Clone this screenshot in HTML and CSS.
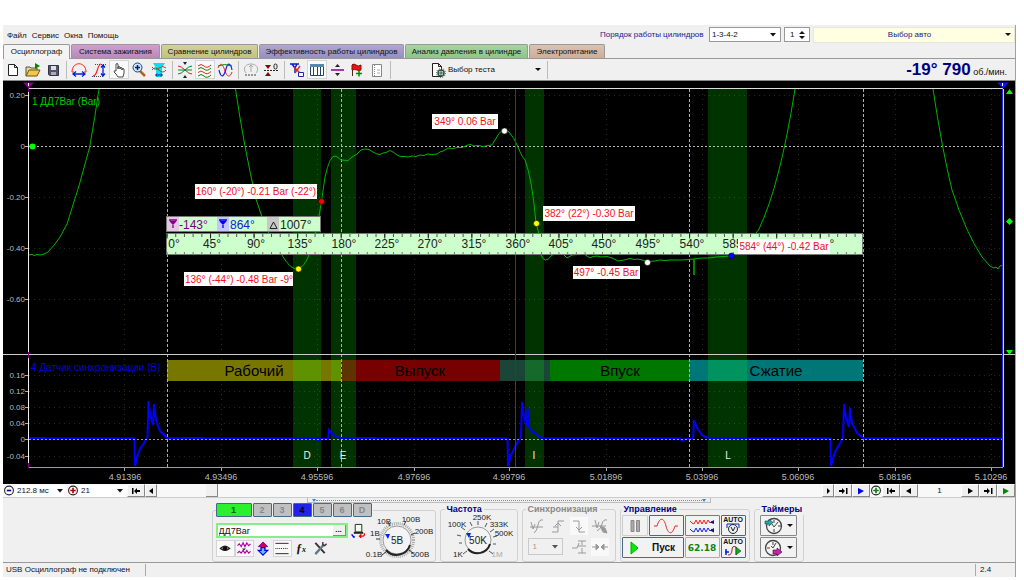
FILE: index.html
```html
<!DOCTYPE html>
<html lang="ru">
<head>
<meta charset="utf-8">
<title>USB Осциллограф</title>
<link rel="stylesheet" href="styles.css">
</head>
<body>
<main class="app">
  <header class="menubar">
    <nav class="menu">
      <button>Файл</button><button>Сервис</button><button>Окна</button><button>Помощь</button>
    </nav>
    <div class="setup">
      <label for="order">Порядок работы цилиндров</label>
      <select id="order" class="field order"><option>1-3-4-2</option></select>
      <select id="cyl" class="field cyl" aria-label="Номер цилиндра"><option>1</option></select>
      <button class="car"><span>Выбор авто</span><i class="caret"></i></button>
    </div>
  </header>

  <nav class="tabs">
    <button class="tab active">Осциллограф</button>
    <button class="tab ignition">Система зажигания</button>
    <button class="tab compare">Сравнение цилиндров</button>
    <button class="tab efficiency">Эффективность работы цилиндров</button>
    <button class="tab pressure">Анализ давления в цилиндре</button>
    <button class="tab power">Электропитание</button>
  </nav>

  <div class="toolbar">
    <button class="tool" aria-label="Новый"><svg viewBox="0 0 18 18"><path d="M4.500 3.500h6l3 3v8h-9zM10.500 3.500v3h3" fill="#fff" stroke="#222"/></svg></button>
    <button class="tool" aria-label="Открыть"><svg viewBox="0 0 18 18"><path d="M2 15V6h4l1 1h6v3" fill="#e8d890" stroke="#554"/><path d="M2 15l3-6h11l-3 6z" fill="#f2c84c" stroke="#665510"/><path d="M11 2l5 3-5 3z" fill="#080"/></svg></button>
    <button class="tool" aria-label="Сохранить"><svg viewBox="0 0 18 18"><path d="M4.500 4.500h10v10h-9l-1-1z" fill="#556" stroke="#334"/><path d="M7 5h5v4H7z" fill="#dde"/><path d="M7 11h5v3H7z" fill="#aab"/></svg></button>
    <i class="sep"></i>
    <button class="tool" aria-label="Период"><svg viewBox="0 0 18 18"><path d="M4 11H2C2 0 16 0 16 11h-2" fill="none" stroke="#f22"/><path d="M3 13h12M6 10.500L3 13l3 2.500M12 10.500l3 2.500-3 2.500" fill="none" stroke="#02d" stroke-width="1.300"/></svg></button>
    <button class="tool" aria-label="Амплитуда"><svg viewBox="0 0 18 18"><path d="M3 15c5 0 4-12 8-12" fill="none" stroke="#f22" stroke-width="1.200"/><path d="M5 3.500h11M2 15.500h12" stroke="#446" stroke-dasharray="1 1"/><path d="M13 4v11M11 6.500L13 4l2 2.500M11 12.500l2 2.500 2-2.500" fill="none" stroke="#02d" stroke-width="1.300"/></svg></button>
    <button class="tool pressed" aria-label="Рука"><svg viewBox="0 0 18 18"><path d="M6 10V3q1-1 2 0v5V6q1-1 2 0v2-1q1-1 2 0v2-1q1-1 2 0v4l-1 4H8l-2-3-2-2q0-2 2-1z" fill="#fff" stroke="#222" stroke-width=".8"/></svg></button>
    <button class="tool" aria-label="Лупа"><svg viewBox="0 0 18 18"><path d="M10 10l5 5" stroke="#a62" stroke-width="2.500"/><circle cx="7.500" cy="6.500" r="4.500" fill="#cfe4fa" stroke="#247"/><path d="M5 6.500h5M7.500 4v5" stroke="#026" stroke-width="1.500"/></svg></button>
    <button class="tool" aria-label="Масштаб"><svg viewBox="0 0 18 18"><path d="M3 2h12l-3 5v9H6V7z" fill="#1de"/><path d="M2 6q3 4 7 1t7 0" fill="none" stroke="#f22"/><path d="M2 9q3-4 7 0t7 0" fill="none" stroke="#086"/><path d="M6 14h6M7 12.500L5.500 14 7 15.500M11 12.500l1.500 1.500-1.500 1.500" fill="none" stroke="#02a"/></svg></button>
    <i class="sep"></i>
    <button class="tool" aria-label="Совместить"><svg viewBox="0 0 18 18"><path d="M2 5q3 0 7 4t7 4" fill="none" stroke="#d22"/><path d="M2 13q3 0 7-4t7-4M2 9h14" fill="none" stroke="#083"/><path d="M7 1h4L9 4zM7 17h4l-2-3z" fill="#222"/></svg></button>
    <button class="tool pressed" aria-label="Раздельно"><svg viewBox="0 0 18 18" fill="none"><path d="M2 5q3-3 6 0t7-1" stroke="#e22"/><path d="M2 8q3-3 6 0t7-1" stroke="#080"/><path d="M2 11.500q3-3 6 0t7-1" stroke="#e22"/><path d="M2 15q3-3 6 0t7-1" stroke="#080"/></svg></button>
    <button class="tool" aria-label="Наложить"><svg viewBox="0 0 18 18" fill="none"><path d="M2 7c3-7 5-3 7 3s5 7 7 1" stroke="#e22"/><path d="M3 9c2 9 5 7 7-1s5-5 6 1" stroke="#22e" stroke-width="1.200"/><path d="M2 5q6-3 14 0" stroke="#080"/></svg></button>
    <i class="sep"></i>
    <button class="tool" aria-label="Авто" disabled><svg viewBox="0 0 18 18"><path d="M4 12C0 7 4 3 9 3s9 4 5 9M9 4v7M7 6l2-2 2 2" fill="none" stroke="#aaa"/><path d="M3 14h12" stroke="#999" stroke-width="2" stroke-dasharray="2 1"/></svg></button>
    <button class="tool" aria-label="Ноль"><svg viewBox="0 0 18 18"><path d="M3 4h6L6 8zM3 15h6l-3-4z" fill="#800"/><path d="M2 9.500h14" stroke="#222" stroke-dasharray="2 1"/><rect x="12" y="3" width="3" height="5" rx="1.500" fill="none" stroke="#222"/></svg></button>
    <i class="sep"></i>
    <button class="tool" aria-label="Фильтр"><svg viewBox="0 0 18 18"><path d="M2 3h9M4 3l3 4v5M9 3L7 7" fill="none" stroke="#02c" stroke-width="1.500"/><path d="M6 6l7 7M12 5l-5 7" stroke="#e22" stroke-width="1.300"/><path d="M10.500 11.500h5v4h-5z" fill="#fff" stroke="#22a"/></svg></button>
    <button class="tool pressed" aria-label="Таблица"><svg viewBox="0 0 18 18"><path d="M2.500 3.500h13v11h-13z" fill="#fff" stroke="#246"/><path d="M2 3h14v3H2z" fill="#58a"/><path d="M5.500 6v8M9.500 6v8M12.500 6v8" stroke="#246"/></svg></button>
    <button class="tool" aria-label="Разделить"><svg viewBox="0 0 18 18"><path d="M3 9h13" stroke="#808" stroke-width="1.500"/><path d="M7 6h5L9.500 3zM7 12h5l-2.500 3z" fill="#222"/></svg></button>
    <button class="tool" aria-label="Добавить метку"><svg viewBox="0 0 18 18"><path d="M4.500 3v12" stroke="#522"/><path d="M4 4q2-2 4 0t5 0v5q-2 1-4 0t-5 0z" fill="#e11" stroke="#811"/><path d="M8 12.500h6M11 9.500v6" stroke="#080" stroke-width="1.500"/></svg></button>
    <button class="tool" aria-label="Отчёт" disabled><svg viewBox="0 0 18 18"><path d="M4.500 3.500h9v12h-9z" fill="#fff" stroke="#888"/><path d="M6.500 4v11" stroke="#888" stroke-dasharray="1 1"/><path d="M9 9h3M9 12h3" stroke="#aaa"/></svg></button>
    <i class="sep"></i>
    <button class="test">
      <svg viewBox="0 0 18 18"><path d="M3.500 2.500h6l3 3v10h-9zM9.500 2.500v3h3" fill="#fff" stroke="#222"/><circle cx="12" cy="12" r="3" fill="#fff" stroke="#354" stroke-width="1.500"/><path d="M9 12h6M12 9v6" stroke="#354"/><circle cx="12" cy="12" r="4.500" fill="none" stroke="#354" stroke-dasharray="1 1.300"/></svg>
      <span>Выбор теста</span><i class="caret"></i>
    </button>
    <i class="sep"></i>
    <output class="rpm"><b>-19° 790</b> об./мин.</output>
  </div>

  <svg class="scope" viewBox="3 81 1012 403" role="img" aria-label="Осциллограмма">
    <rect x="3" y="81" width="1012" height="403" fill="#000"/>
    <g class="grid">
      <path d="M124.500 89V467M221.500 89V467M317.500 89V467M414.500 89V467M509.500 89V467M606.500 89V467M702.500 89V467M798.500 89V467M895.500 89V467M991.500 89V467"/>
      <path d="M29 95.500H1003M29 197.500H1003M29 248.500H1003M29 299.500H1003M29 375.500H1003M29 391.500H1003M29 407.500H1003M29 423.500H1003M29 456.500H1003"/>
    </g>
    <g class="phases">
      <rect x="167" y="360" width="174" height="21" fill="#770"/>
      <rect x="341" y="360" width="159" height="21" fill="#700"/>
      <rect x="500" y="360" width="50" height="21" fill="#1b4536"/>
      <rect x="550" y="360" width="139" height="21" fill="#007700"/>
      <rect x="689" y="360" width="174" height="21" fill="#077"/>
    </g>
    <g fill="#0f0" fill-opacity=".2">
      <rect x="293" y="89" width="28" height="378"/><rect x="331" y="89" width="25" height="378"/>
      <rect x="525" y="89" width="19" height="378"/><rect x="708" y="89" width="39" height="378"/>
    </g>
    <g class="phase-name">
      <text x="254" y="376">Рабочий</text><text x="420" y="376">Выпуск</text>
      <text x="620" y="376">Впуск</text><text x="776" y="376">Сжатие</text>
    </g>
    <path d="M29 146.500H1003" stroke="#bbb" stroke-dasharray="2 2"/>
    <path d="M167.500 89V467M341.500 89V467M689.500 89V467M863.500 89V467" stroke="#c4c400" stroke-dasharray="3 2"/>

    <path class="pressure-line" d="M28 255l4-.5 2 1 3-1 3 .5 4-1 4-2 7-8 5-7 7-13Q80 185 89.700 147 95 117 99 89M235.500 89Q244 147 256 199L262 217 274 246 282 255Q298 283 309 255L317 228 321.500 201 325 177Q330 155 335 156 338 157 341 160L348 160.500 352 157 357 154 361 150 365 149 369 149.500 372 151.500 377 154 380 154.500 383 153 386 152.500 390 150.500 393 152 398 155.500 401 156.500 405 156.500 408 157 412 156 416 156.500 420 155 424 155.500 427 154 432 154.500 437 154 440 152 443 151 448 148 453 148.500 457 147.500 462 147.500 468 145 471 144.500 473 146 478 145.500 483 146.500 488 145.500 492 145 498 135Q503 127 509 132 515 139 517 145L522 156 525 160Q532 178 536 223L539 234 541 255Q545 265 552 255L562 253 567 258 572 255 584 254 590 258 593 256.500 597 256 601 257 607 256.500 612 258 618 261 624 260 630 258.500 634 259.500 638 259 648 261.500 655 261 660 260 665 260.500 670 260 682 260 694 259V275V259L702 258 709 258 716 257 731 256L750 240 756 233 759 229Q780 185 795 89M933 89Q942 149 952 190 966 233 982 257L990 266 994 268 996 267 998 269 1000 266 1003 265"/>
    <path class="sync-line" d="M28 438.500H134.500L135 466 137 457 140 449 144 443 147.500 437 148.500 401 150 414 153 425 154 404 156 420 160 431 167 438 185 438.500H318V441L321 439H328L329 430 334 435.500 341 438.500H507.500L508 466 511 455 517 443 521 437 522 402 524 417 527 426 527.500 408 529 427 533 432 542 438.500H680L682 441 685 439H693L694 420 697 428 702 435 709 438.500H830.500L831 466 835 452 843 438 844 404 846 418 849 427 850 408 852 423 857 433 864 438.500H1003"/>
    <path d="M29 437.500h17M182 437.500h22M343 437.500h33M584 437.500h12M712 437.500h30" stroke="#00f"/>
    <path d="M29 439.500H1003" stroke="#fff" stroke-opacity=".6" stroke-dasharray="2 2"/>

    <path d="M28.500 88.500H1003" stroke="#ddd"/>
    <path d="M28.500 88V467" stroke="#eee"/>
    <path d="M3 354.500H1015" stroke="#ccc"/>
    <path d="M28 467.500H1003" stroke="#99a"/>
    <path d="M1002.500 89V467" stroke="#22f"/><path d="M1003.500 89V467" stroke="#ddf"/>
    <path d="M515.500 89V467" stroke="#c00018"/>
    <path d="M25 95.500h3M25 146.500h3M25 197.500h3M25 248.500h3M25 299.500h3M25 375.500h3M25 391.500h3M25 407.500h3M25 423.500h3M25 439.500h3M25 456.500h3M124.500 468v3M221.500 468v3M317.500 468v3M414.500 468v3M509.500 468v3M606.500 468v3M702.500 468v3M798.500 468v3M895.500 468v3M991.500 468v3" stroke="#aaa"/>
    <path d="M28.500 86v6M28.500 352v6M28.500 463v5" stroke="#808"/>
    <path d="M23 82.500h11l-5.500 6z" fill="#808"/><path d="M28.500 83v3" stroke="#fff"/>
    <path d="M997 82.500h12l-6 6z" fill="#11f"/><path d="M1002.500 83v3" stroke="#fff"/>
    <path d="M1006 94l3.500-5 3.500 5z" fill="#0f0"/>
    <path d="M1006 221.500l3.500-3.500 3.500 3.500-3.500 3.500z" fill="#0f0"/>
    <path d="M1006 350l3.500 5 3.500-5z" fill="#0f0"/>
    <circle cx="32.500" cy="146.500" r="3" fill="#0f0"/>

    <g class="axis-y">
      <text x="25" y="98">0.20</text><text x="25" y="149">0</text><text x="25" y="200">-0.20</text><text x="25" y="251">-0.40</text><text x="25" y="302">-0.60</text>
      <text x="25" y="378">0.16</text><text x="25" y="394">0.12</text><text x="25" y="410">0.08</text><text x="25" y="426">0.04</text><text x="25" y="442">0</text><text x="25" y="459">-0.04</text>
    </g>
    <g class="axis-x">
      <text x="125" y="480">4.91396</text><text x="221" y="480">4.93496</text><text x="317" y="480">4.95596</text><text x="414" y="480">4.97696</text><text x="509" y="480">4.99796</text>
      <text x="606" y="480">5.01896</text><text x="702" y="480">5.03996</text><text x="798" y="480">5.06096</text><text x="895" y="480">5.08196</text><text x="991" y="480">5.10296</text>
    </g>
    <g class="channel-name">
      <text x="32" y="105" fill="#0c0">1 ДД7Bar (Bar)</text>
      <text x="31" y="371" fill="#00d">4 Датчик синхронизации (В)</text>
    </g>
    <g class="zone">
      <text x="307" y="459">D</text><text x="343" y="459">E</text><text x="534" y="459">I</text><text x="728" y="459">L</text>
    </g>

    <rect x="166.500" y="216.500" width="154" height="15" fill="#cfc" stroke="#777"/>
    <rect x="167" y="217" width="12" height="14" fill="#e2c8e2"/>
    <rect x="217" y="217" width="12" height="14" fill="#c6c6ff"/>
    <rect x="267" y="217" width="12" height="14" fill="#c8c8c8"/>
    <path d="M169 220h8M173 221v7M170 221l3 3 3-3" fill="#808" stroke="#808" stroke-width="1.300"/>
    <path d="M219 220h8M223 221v7M220 221l3 3 3-3" fill="#00f" stroke="#00f" stroke-width="1.300"/>
    <path d="M270 228.500l3.500-6.500 3.500 6.500z" fill="none" stroke="#222"/>
    <g class="angle">
      <text x="179" y="229" fill="#707">-143°</text><text x="230" y="229" fill="#12c">864°</text><text x="280" y="229">1007°</text>
    </g>
    <rect x="166.500" y="233.500" width="696" height="21" fill="#cfc" stroke="#777"/>
    <path d="M166.500 235.500H863" stroke="#555" stroke-width="3" stroke-dasharray="1 7.710"/>
    <path d="M166.500 253H863" stroke="#777" stroke-width="2" stroke-dasharray="1 7.710"/>
    <path d="M166.500 236H863" stroke="#222" stroke-width="5" stroke-dasharray="1 42.550"/>
    <g class="angle ticks">
      <text x="174" y="248">0°</text><text x="212" y="248">45°</text><text x="256" y="248">90°</text><text x="300" y="248">135°</text><text x="344" y="248">180°</text><text x="387" y="248">225°</text><text x="430" y="248">270°</text><text x="474" y="248">315°</text><text x="518" y="248">360°</text><text x="561" y="248">405°</text><text x="604" y="248">450°</text><text x="648" y="248">495°</text><text x="692" y="248">540°</text><text x="735" y="248">585°</text><text x="822" y="248">675°</text>
    </g>

    <g fill="#fff">
      <rect x="432" y="114" width="66" height="15"/><rect x="195" y="184" width="122" height="15"/><rect x="543" y="206" width="92" height="15"/>
      <rect x="184" y="272" width="109" height="14"/><rect x="573" y="266" width="67" height="13"/><rect x="738" y="239" width="92" height="15"/>
    </g>
    <g class="callout">
      <text x="465" y="125">349° 0.06 Bar</text><text x="256" y="195">160° (-20°) -0.21 Bar (-22°)</text><text x="589" y="217">382° (22°) -0.30 Bar</text>
      <text x="239" y="283">136° (-44°) -0.48 Bar -9°</text><text x="606" y="276">497° -0.45 Bar</text><text x="784" y="250">584° (44°) -0.42 Bar</text>
    </g>
    <g class="marks">
      <circle cx="504.500" cy="131" r="3" fill="#fff"/><circle cx="321.500" cy="201.500" r="3" fill="#f00"/><circle cx="536.500" cy="223.500" r="3" fill="#ff0"/>
      <circle cx="298.500" cy="269" r="3" fill="#ff0"/><circle cx="647.500" cy="262.500" r="3" fill="#fff"/><circle cx="731.500" cy="256" r="3" fill="#00f"/>
    </g>
  </svg>

  <div class="transport">
    <svg class="round" viewBox="0 0 10 10"><circle cx="5" cy="5" r="4" fill="#fff" stroke="#222"/><path d="M3 5h4" stroke="#00a" stroke-width="1.500"/></svg>
    <select class="scale time" aria-label="Развёртка"><option>212.8 мс</option></select>
    <svg class="round" viewBox="0 0 10 10"><circle cx="5" cy="5" r="4" fill="#fff" stroke="#222"/><path d="M2.500 5h5M5 2.500v5" stroke="#b00" stroke-width="1.500"/></svg>
    <select class="scale zoom" aria-label="Масштаб"><option>21</option></select>
    <button class="step" aria-label="В начало"><svg viewBox="0 0 10 8"><path d="M1 1h1.500v6H1zM6 1v6L3 4zM6 3h3v2H6z"/></svg></button>
    <button class="step small" aria-label="Назад"><svg viewBox="0 0 10 8"><path d="M7 1v6L3 4z"/></svg></button>
    <div class="track"><button class="thumb" aria-label="Позиция"></button></div>
    <button class="step small" aria-label="Вперёд"><svg viewBox="0 0 10 8"><path d="M4 1v6l3-3z"/></svg></button>
    <button class="step" aria-label="В конец"><svg viewBox="0 0 10 8"><path d="M8 1h1.500v6H8zM4 1v6l3-3zM1 3h3v2H1z"/></svg></button>
    <button class="step" aria-label="Воспроизвести"><svg viewBox="0 0 10 8"><path d="M2 1v6.500L8 4z" fill="#00f"/></svg></button>
    <svg class="round" viewBox="0 0 10 10"><circle cx="5" cy="5" r="4" fill="#fff" stroke="#222"/><path d="M2.500 5h5M5 2.500v5" stroke="#080" stroke-width="1.500"/></svg>
    <button class="step" aria-label="Первый кадр"><svg viewBox="0 0 10 8"><path d="M1 1h1.500v6H1zM6 1v6L3 4zM6 3h3v2H6z"/></svg></button>
    <button class="step" aria-label="Предыдущий кадр"><svg viewBox="0 0 10 8"><path d="M7 1v6L2 4z"/></svg></button>
    <output class="frame">1</output>
    <button class="step" aria-label="Следующий кадр"><svg viewBox="0 0 10 8"><path d="M3 1v6l5-3z"/></svg></button>
    <button class="step" aria-label="Последний кадр"><svg viewBox="0 0 10 8"><path d="M8 1h1.500v6H8zM4 1v6l3-3zM1 3h3v2H1z"/></svg></button>
    <button class="step" aria-label="Играть"><svg viewBox="0 0 10 8"><path d="M2 1v6.500L8 4z" fill="#080"/></svg></button>
  </div>

  <div class="splitter"><div class="grip"><i></i><b></b><i></i></div></div>

  <section class="panel">
    <fieldset class="group channels">
      <legend class="chan-row">
        <button class="chan on1">1</button><button class="chan">2</button><button class="chan">3</button><button class="chan on4">4</button><button class="chan">5</button><button class="chan">6</button><button class="chan">D</button>
      </legend>
      <div class="chan-body">
        <div class="name-row">
          <div class="namebox"><input aria-label="Датчик" value="ДД7Bar"><button class="dots">...</button></div>
          <svg class="ico" viewBox="0 0 16 16"><path d="M4.500 1.500h7v8h-7z" fill="#efe" stroke="#222"/><path d="M3 10.500h10" stroke="#222" stroke-width="2"/><path d="M4 15q-3-1-3-3M4 15l-2 0" stroke="#00d" fill="none" stroke-width="1.500"/><path d="M9 14h4q2-1 1-3M11 12l-2 2 2 2" stroke="#e00" fill="none" stroke-width="1.300"/></svg>
        </div>
        <div class="mode-row">
          <button class="mode pressed" aria-label="Видимость"><svg viewBox="0 0 16 16"><path d="M3 8q5-5 10 0-5 4-10 0z" fill="#bbb" stroke="#222" stroke-width="1.200"/><circle cx="8" cy="8" r="2.500" fill="#111"/></svg></button>
          <button class="mode pressed" aria-label="Форма"><svg viewBox="0 0 16 16"><path d="M1 5l2-2 2 3 2-4 2 4 2-4 2 3 2-2M1 13l2-2 2 2 2-3 2 3 2-3 2 3 2-2" fill="none" stroke="#a0a" stroke-width="1.200"/><path d="M6 8h4l-2 2z" fill="#222"/></svg></button>
          <button class="mode" aria-label="Сдвиг"><svg viewBox="0 0 16 16"><path d="M8 1l5 5h-3v3H6V6H3z" fill="#c06" stroke="#808"/><path d="M8 15l5-5h-3V7H6v3H3z" fill="#5cf" stroke="#00d" stroke-width="1.300"/></svg></button>
          <button class="mode pressed" aria-label="Уровни"><svg viewBox="0 0 16 16"><path d="M1 2.500h14M1 13.500h14" stroke="#222"/><path d="M1 8h14" stroke="#222" stroke-dasharray="1 1"/></svg></button>
          <button class="mode fx" aria-label="Функция"><b>ƒ</b>x</button>
          <button class="mode" aria-label="Настройка"><svg viewBox="0 0 16 16"><path d="M3 2l10 11" stroke="#333" stroke-width="2"/><path d="M12 4L3 14" stroke="#678" stroke-width="2.500"/><path d="M11 1v3l2 1 2-2" fill="none" stroke="#333" stroke-width="1.500"/></svg></button>
        </div>
      </div>
      <svg class="knob" viewBox="370 518 66 46">
        <circle cx="401" cy="541" r="16.500" fill="none" stroke="#aaa" stroke-width="3" stroke-dasharray="1 1"/>
        <path d="M390 553l-4 3M384 540h-4M394 527l-2-4M408 526l2-4M415 536l4-2M413 551l4 3" stroke="#333"/>
        <circle cx="401" cy="541" r="14" fill="#f4f4f4" stroke="#999"/><path d="M390 551a14 14 0 0 0 24-5" fill="none" stroke="#222" stroke-width="2"/>
        <path d="M389 535h5l-2 5z" fill="#02f"/>
        <text x="401" y="545" class="value">5В</text>
        <text x="388" y="525">10В</text><text x="415" y="523">100В</text><text x="428" y="535">200В</text><text x="379" y="537">1В</text><text x="378" y="558">0.1В</text><text x="424" y="558">500В</text>
      </svg>
    </fieldset>

    <fieldset class="group freq">
      <legend>Частота</legend>
      <svg class="knob" viewBox="446 516 68 46">
        <path d="M468 552l-4 3M463 544h-3M462 537l-4-1M466 531l-4-3M473 527l-2-4M479 526v-4M486 528l2-4M491 533l4-3M494 538l4-1M494 545h3M490 552l4 3" stroke="#555"/>
        <circle cx="479" cy="541" r="13" fill="#f4f4f4" stroke="#999"/><path d="M469 550a13 13 0 0 0 22-5" fill="none" stroke="#222" stroke-width="2"/>
        <path d="M467 534h5l-2 5z" fill="#02f"/>
        <text x="479" y="545" class="value">50K</text>
        <text x="483" y="521">250K</text><text x="458" y="528">100K</text><text x="500" y="528">333K</text><text x="505" y="537">500K</text><text x="459" y="558">1K</text><text x="498" y="558" class="off">1M</text>
      </svg>
    </fieldset>

    <fieldset class="group sync" disabled>
      <legend>Синхронизация</legend>
      <div class="sync-grid">
        <svg viewBox="0 0 18 18"><path d="M2 10h13M6 16Q9 14 10 8t5-5M3 5l2 7 2-5" /></svg>
        <svg viewBox="0 0 18 18"><path d="M3 15h6V4h6M6 9l3-3 3 3M4 10h5"/></svg>
        <svg class="lit" viewBox="0 0 18 18"><path d="M3 4h6v11h6M6 10l3 3 3-3"/></svg>
        <svg viewBox="0 0 18 18"><path d="M1 9h14M4 3l2 8 2-6M6 14q4-2 5-7t5-4"/><path d="M9 9l5 2 2 5-4-1z" fill="#999"/></svg>
        <select aria-label="Канал синхронизации"><option>1</option></select>
        <svg viewBox="0 0 18 18"><path d="M8 3h8M8 8h8M8 15h8M2 10h5l2-5M12 3v4M12 15v-5"/></svg>
        <svg class="lit" viewBox="0 0 18 18"><path d="M1 9h6M5 6l3 3-3 3zM17 9h-6M13 6l-3 3 3 3z" fill="#999"/></svg>
      </div>
    </fieldset>

    <fieldset class="group control">
      <legend>Управление</legend>
      <div class="control-grid">
        <button class="big off" aria-label="Пауза" disabled><svg viewBox="0 0 18 18"><path d="M5 3.500h3v11H5zM10.500 3.500h3v11h-3z" fill="#aaa" stroke="#888"/></svg></button>
        <button class="big" aria-label="Синус"><svg viewBox="0 0 28 18"><path d="M2 9h3C8-1 12 1 14 9s6 10 9 0h3" fill="none" stroke="#e22"/></svg></button>
        <button class="big red" aria-label="Запись"><svg viewBox="0 0 28 18"><path d="M2 4l2 2 2 1 2-4 2 4 2-4 2 4 2-4 2 4 2-4 2 3 2-2" fill="none" stroke="#e22"/><path d="M2 12l2 2 2 1 2-4 2 4 2-4 2 4 2-4 2 4 2-4 2 3 2-2" fill="none" stroke="#22e"/><path d="M26 3l-4 2.500 4 1.500z" fill="#118"/><path d="M26 11l-4 2.500 4 2z" fill="#118"/></svg></button>
        <button class="big auto" aria-label="Авто амплитуда"><span>AUTO</span><svg viewBox="0 0 18 12"><path d="M3 1h12M3 1v4M15 1v4" stroke="#02c" fill="none"/><circle cx="9" cy="6" r="4.500" fill="#eee" stroke="#222"/><path d="M7 4l2 4 2-4" fill="none" stroke="#222"/></svg></button>
        <button class="big wide"><svg viewBox="0 0 10 14"><path d="M1 1v12l7-6z" fill="#0e0" stroke="#0a0"/></svg><b>Пуск</b></button>
        <output class="big count">62.18</output>
        <button class="big auto" aria-label="Авто синхронизация"><span>AUTO</span><svg viewBox="0 0 18 12"><path d="M2 4v6M1 7h4" stroke="#02c" stroke-width="1.500"/><path d="M4 10q4 0 4-5t4-3v8" fill="none" stroke="#a22"/><path d="M12 2v8l5-4z" fill="#0b0" stroke="#222" stroke-width=".5"/></svg></button>
      </div>
    </fieldset>

    <fieldset class="group timers">
      <legend>Таймеры</legend>
      <button class="big" aria-label="Таймер пуска"><svg viewBox="0 0 20 18"><circle cx="11" cy="9" r="7.500" fill="#f4f4f4" stroke="#444" stroke-width="1.300"/><path d="M11 3v3M11 10l4-5M11 12v3M15 9h3M11 10L9 7" stroke="#444"/><path d="M2 4h4V2l4 3.500L6 9V7H2z" fill="#2aa" stroke="#044" stroke-width=".6"/></svg><i class="caret"></i></button>
      <button class="big" aria-label="Таймер остановки"><svg viewBox="0 0 20 18"><circle cx="10" cy="9" r="7.500" fill="#f4f4f4" stroke="#444" stroke-width="1.300"/><path d="M10 3v3M10 9l3-5M4 9h3M10 9L8 7" stroke="#444"/><path d="M10 11h4V9l5 4-5 4v-2h-4z" fill="#c2a" stroke="#404" stroke-width=".6"/></svg><i class="caret"></i></button>
    </fieldset>
  </section>

  <footer class="status"><span class="device">USB Осциллограф не подключен</span><span class="version">2.4</span></footer>
</main>
</body>
</html>
```
FILE: styles.css
```css
* { box-sizing: border-box; }
body {
  margin: 0;
  background: #fff;
  color: #111;
  font: 8px/12px "Liberation Sans", Arial, sans-serif;
}
button, select, input {
  font: inherit;
  color: inherit;
  margin: 0;
  padding: 0;
  border: 0;
  border-radius: 0;
  background: none;
}
select {
  appearance: none;
  background: #fff url("data:image/svg+xml,%3Csvg xmlns='http://www.w3.org/2000/svg' width='6' height='4'%3E%3Cpath d='M0 0h6L3 3.500z' fill='%23111'/%3E%3C/svg%3E") no-repeat right 4px center;
}
svg { display: block; }
.app {
  margin: 25px 8px 3px 3px;
  border-right: 1px solid #a0a0a0;
  background: #f0f0f0;
}
.caret {
  border: 3px solid transparent;
  border-top-color: #111;
  border-bottom: 0;
}

.menubar {
  display: flex;
  justify-content: space-between;
  height: 19px;
}
.menu {
  display: flex;
  gap: 5px;
  padding: 2px 4px 0;
  align-items: center;
}
.setup {
  display: flex;
  flex: 0 1 415px;
  align-items: center;
  gap: 3px;
  color: #1a1a90;
}
.setup label { flex: 1; white-space: nowrap; }
.field {
  height: 15px;
  border: 1px solid #999;
  padding-left: 2px;
  color: #111;
}
.order { width: 72px; }
.cyl {
  width: 26px;
  padding-left: 5px;
  background: #fff url("data:image/svg+xml,%3Csvg xmlns='http://www.w3.org/2000/svg' width='6' height='10'%3E%3Cpath d='M0 4h6L3 1zM0 6h6L3 9z' fill='%23111'/%3E%3C/svg%3E") no-repeat right 4px center;
}
.car {
  display: flex;
  flex: 0 0 202px;
  height: 16px;
  align-items: center;
  background: #ffffe1;
  border: 1px solid #e8e8d8;
  padding-right: 3px;
}
.car span { flex: 1; }

.tabs {
  display: flex;
  gap: 1px;
  height: 15px;
  border-bottom: 1px solid #999;
}
.tab {
  border: 1px solid #999;
  border-bottom: 0;
  border-radius: 2px 2px 0 0;
  white-space: nowrap;
}
.active { flex: 0 0 67px; background: #f4f4f4; height: 15px; }
.ignition { flex: 0 0 89px; background: linear-gradient(#cfa0cf, #b888b8); }
.compare { flex: 0 0 97px; background: linear-gradient(#d2d29a, #c2c27c); }
.efficiency { flex: 0 0 145px; background: linear-gradient(#b0a8d0, #968ebc); }
.pressure { flex: 0 0 123px; background: linear-gradient(#a8d4a2, #8fc48a); }
.power { flex: 0 0 76px; background: linear-gradient(#dcc2b0, #ccae9a); }

.toolbar {
  display: flex;
  align-items: center;
  height: 22px;
  border-bottom: 1px solid #888;
}
.tool {
  flex: 0 0 20px;
  height: 19px;
  padding: 0 1px;
}
.tool svg { width: 18px; height: 18px; }
.pressed { background: #f9f9f9; border: 1px solid #d4d4d4; }
.tool.pressed { padding: 0; }
.sep {
  flex: 0 0 6px;
  height: 18px;
  background: linear-gradient(#bbb, #bbb) no-repeat center / 1px 100%;
}
.test {
  display: flex;
  align-items: center;
  flex: 0 0 151px;
  gap: 1px;
  padding: 0 3px 0 36px;
  text-align: left;
}
.test svg { width: 18px; height: 18px; }
.test span { flex: 1; }
.rpm { margin-left: auto; padding-right: 8px; font-size: 9px; }
.rpm b { font-size: 17px; line-height: 20px; color: #000080; }

.scope { width: 100%; height: auto; }
.grid path { fill: none; stroke: #2a2a14; stroke-dasharray: 1 4; }
.pressure-line { fill: none; stroke: #00b400; }
.sync-line { fill: none; stroke: #00f; stroke-width: 2; }
.phase-name { font-size: 15px; fill: #000; text-anchor: middle; }
.axis-y { font-size: 8px; fill: #bbb; text-anchor: end; }
.axis-x { font-size: 9px; fill: #bbb; text-anchor: middle; }
.channel-name { font-size: 10px; }
.zone { font-size: 10px; fill: #eee; text-anchor: middle; }
.angle { font-size: 12px; fill: #222; }
.ticks { text-anchor: middle; }
.callout { font-size: 10px; fill: #f01020; text-anchor: middle; }
.marks circle { stroke: #000; stroke-width: 0.5; }

.transport {
  display: flex;
  align-items: center;
  height: 13px;
  background: #f8f8f8;
}
.round { flex: 0 0 12px; height: 11px; }
.scale { height: 12px; padding-left: 2px; background-color: #fff; }
.time { flex: 0 0 52px; }
.zoom { flex: 0 0 48px; }
.step {
  flex: 0 0 18px;
  height: 13px;
  padding: 0 3px;
  background: #f0f0f0;
  border: 1px solid #fff;
  border-right-color: #888;
  border-bottom-color: #888;
}
.step svg { width: 10px; height: 8px; }
.step.small { flex-basis: 12px; padding: 0; }
.track { flex: 1; padding-left: 49px; }
.thumb {
  display: block;
  width: 12px;
  height: 13px;
  background: #f0f0f0;
  border-right: 1px solid #888;
  border-bottom: 1px solid #888;
}
.frame { flex: 0 0 43px; text-align: center; }

.splitter {
  display: flex;
  justify-content: center;
  height: 6px;
  border-top: 1px solid #ccc;
}
.grip {
  display: flex;
  align-items: center;
  flex: 0 1 404px;
  height: 5px;
  padding: 0 4px;
  border: 1px solid #bbb;
  border-top: 0;
}
.grip b { flex: 1; border-top: 1px dotted #4a9ad8; }
.grip i { border: 2px solid transparent; border-top: 3px solid #38d; border-bottom: 0; }

.panel {
  display: flex;
  justify-content: center;
  gap: 4px;
  height: 60px;
  padding-right: 3px;
  border-bottom: 1px solid #999;
}
.group {
  margin: 0;
  padding: 0 3px;
  border: 1px solid #d0d0d0;
  border-radius: 3px;
  min-width: 0;
  height: 59px;
}
.group legend {
  padding: 0 2px;
  font-size: 9px;
  line-height: 12px;
  font-weight: bold;
  color: #000080;
}
.channels { display: flex; flex: 0 0 224px; }
.channels .chan-row { display: flex; gap: 1px; padding: 0 1px 0 0; height: 14px; }
.chan {
  width: 19px;
  height: 14px;
  background: #c0c0c0;
  border: 1px solid #456a8c;
  border-radius: 1px;
  color: #888;
  font-size: 9px;
  font-weight: bold;
  line-height: 10px;
}
.on1 { width: 36px; background: #2cf02c; color: #052; }
.on4 { background: #2222e8; color: #001; }
.chan-body { flex: 1; padding-top: 6px; }
.name-row { display: flex; gap: 3px; align-items: center; }
.namebox {
  display: flex;
  width: 132px;
  height: 15px;
  border: 2px solid #84f084;
  background: #fff;
}
.namebox input { flex: 1; min-width: 0; font-size: 9px; padding-left: 1px; outline: 0; }
.dots { width: 13px; background: #f0f0f0; border-right: 1px solid #888; border-bottom: 1px solid #888; line-height: 6px; font-weight: bold; }
.ico { width: 15px; height: 15px; }
.mode-row { display: flex; padding-top: 2px; }
.mode { width: 19px; height: 17px; padding: 0 1px; }
.mode.pressed { padding: 0; }
.mode svg { width: 16px; height: 15px; }
.fx { font-family: "Liberation Serif", serif; font-size: 8px; font-style: italic; font-weight: bold; }
.fx b { font-size: 12px; }
.knob { font-size: 8px; text-anchor: middle; fill: #222; overflow: visible; }
.knob .value { font-size: 10px; }
.knob .off { fill: #aaa; }
.channels .knob { width: 66px; height: 46px; }
.freq { flex: 0 0 78px; }
.freq .knob { width: 68px; height: 46px; }
.freq { padding: 0 4px; }
.sync { flex: 0 0 94px; }
.sync legend { color: #888; }
.sync-grid {
  display: grid;
  grid-template-columns: repeat(4, 18px);
  gap: 3px;
  padding: 2px 2px 0;
}
.sync-grid svg { width: 18px; height: 18px; fill: none; stroke: #999; }
.sync-grid .lit { background: #f9f9f9; }
.sync-grid select {
  grid-column: span 2;
  width: 35px;
  height: 17px;
  border: 1px solid #bbb;
  background-color: #f0f0f0;
  padding-left: 4px;
  color: #777;
}
.control { flex: 0 0 130px; padding: 0 1px; }
.control-grid {
  display: grid;
  grid-template-columns: 26px 35px 35px 25px;
  gap: 1px;
}
.big {
  display: flex;
  align-items: center;
  justify-content: center;
  height: 21px;
  background: #f2f2f2;
  border: 1px solid #456a8c;
  border-radius: 1px;
}
.big svg { height: 18px; }
.big.off { border-color: #ccc; }
.big.red { border-color: #f44; }
.wide { grid-column: span 2; gap: 12px; font-size: 10px; }
.wide svg { height: 14px; }
.count { border-color: #8ab4dc; font: bold 9px "DejaVu Sans", sans-serif; color: #108010; }
.auto { flex-direction: column; line-height: 7px; font-size: 7px; font-weight: bold; }
.auto svg { height: 12px; }
.timers { flex: 0 0 50px; padding: 0 5px; }
.timers .big { width: 37px; gap: 4px; border-color: #888; margin-bottom: 1px; }

.status {
  display: flex;
  justify-content: space-between;
  height: 14px;
  padding: 1px 0;
}
.device { width: 143px; padding-left: 3px; border-right: 1px solid #aaa; }
.version { width: 40px; padding-left: 4px; border-left: 1px solid #aaa; }
```
